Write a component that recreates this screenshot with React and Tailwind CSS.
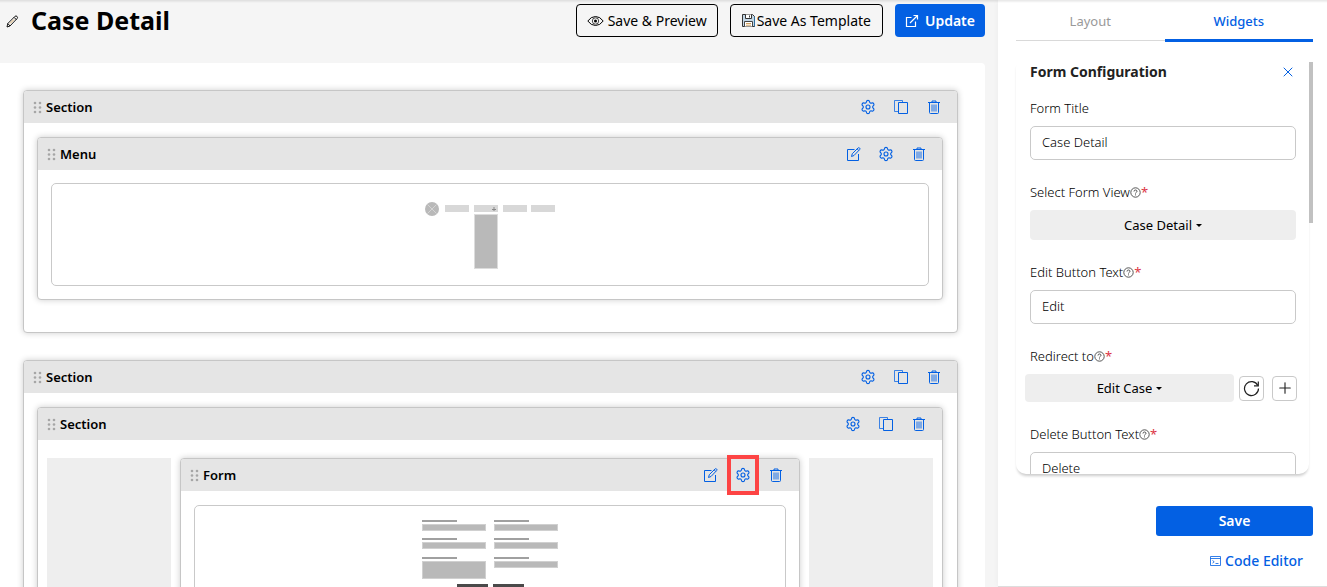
import { useState } from 'react';
import { Settings, Plus, X } from 'lucide-react';

const ICON = 'w-4 h-4 block';

const GripIcon = () => (
  <svg viewBox="0 0 9 13" className="w-[9px] h-[13px] shrink-0" fill="#a6a6a6">
    {[2, 6.5, 11].map((y) => (
      <g key={y}>
        <circle cx="2" cy={y} r="1.3" />
        <circle cx="7" cy={y} r="1.3" />
      </g>
    ))}
  </svg>
);

const PencilIcon = () => (
  <svg viewBox="0 0 13 13" className="w-[13px] h-[13px]" fill="none" stroke="currentColor" strokeWidth=".9">
    <path d="M1 12l.8-3.500L9 1.300q1-.8 2 .1t.2 2L4 11zM8 2.300L10.500 4.800M1.800 8.500L4 11" />
    <path d="M4 8.500l4-4" stroke="#d9a04a" strokeWidth=".8" />
  </svg>
);

const CopyIcon = () => (
  <svg viewBox="0 0 16 16" className={ICON} fill="none" stroke="currentColor">
    <path d="M5.500 12.500h-4v-11h8v2" strokeOpacity=".75" />
    <path d="M5.500 3.500h9v11h-9z" />
  </svg>
);

const TrashIcon = () => (
  <svg viewBox="0 0 16 16" className={ICON} fill="none" stroke="currentColor">
    <path d="M2 3.500h12M6 3.500v-1.500h4v1.500M3.500 3.500v10q0 1 1 1h7q1 0 1-1v-10" />
    <path d="M6 5.500v7M8 5.500v7M10 5.500v7" strokeWidth=".9" />
  </svg>
);

const EditIcon = () => (
  <svg viewBox="0 0 16 16" className={ICON} fill="none" stroke="currentColor">
    <path d="M9.500 3.500h-7v11h11V8" />
    <path d="M6.500 10.500l.8-2.800 5.800-5.800q.8-.6 1.500.1t.1 1.500L9 9.500zM12.200 2.900l1.500 1.500" />
  </svg>
);

const EyeIcon = () => (
  <svg viewBox="0 0 17 12" className="w-[17px] h-3" fill="none" stroke="currentColor">
    <path d="M.8 6Q4 1.500 8.500 1.500T16.200 6Q13 10.500 8.500 10.500T.8 6z" />
    <circle cx="8.500" cy="6" r="3.200" strokeWidth=".7" />
    <circle cx="8.500" cy="6" r="1.500" fill="currentColor" stroke="none" />
  </svg>
);

const FloppyIcon = () => (
  <svg viewBox="0 0 13 13" className="w-[13px] h-[13px]" fill="none">
    <path d="M.5.5h10l2 2v10H.5z" stroke="#333" fill="#8fb8d6" fillOpacity=".5" />
    <path d="M3.500.5v4h6v-4" stroke="#333" fill="#fff" />
    <path d="M7.500 1.500v2" stroke="#333" />
    <path d="M2.500 12.500v-5h8v5" stroke="#444" fill="#fff" />
    <path d="M4 9.500h5M4 11.200h5" stroke="#c58b3b" strokeWidth=".8" />
    <path d="M12.500 3v9.500" stroke="#2f6f9f" />
  </svg>
);

const OpenIcon = () => (
  <svg viewBox="0 0 14 14" className="w-[14px] h-[14px]" fill="none" stroke="currentColor" strokeWidth="1.200">
    <path d="M6.500 3.500h-5v9h9v-5" />
    <path d="M8.500 1.500h4v4M12.500 1.500L5 9" />
  </svg>
);

const RefreshIcon = () => (
  <svg viewBox="0 0 17 17" className="w-[17px] h-[17px]" fill="none" stroke="currentColor" strokeWidth="1.200">
    <path d="M14.800 5.500A7 7 0 1 0 15.500 8.500" />
    <path d="M15.300 1.500v4.300h-4.300" />
  </svg>
);

const HelpIcon = () => (
  <svg viewBox="0 0 11 11" className="w-[11px] h-[11px]" fill="none" stroke="#444" strokeWidth=".9">
    <circle cx="5.500" cy="5.500" r="4.700" />
    <path d="M4 4.500Q4 3 5.500 3T7 4.400Q7 5 6.200 5.400T5.500 6.500M5.500 7.400v1" />
  </svg>
);

const ConsoleIcon = () => (
  <svg viewBox="0 0 11 10" className="w-[11px] h-[10px]" fill="none" stroke="currentColor">
    <path d="M.5.5h10v9H.5zM.5 2.500h10" strokeOpacity=".8" />
    <path d="M2.500 4.500l1.700 1.300-1.700 1.300M5.500 7.500h3" strokeWidth=".8" />
  </svg>
);

const CaretIcon = () => (
  <svg viewBox="0 0 6 3" className="w-[6px] h-[3px]" fill="currentColor">
    <path d="M0 0h6L3 3z" />
  </svg>
);

const ACTIONS = {
  edit: { label: 'Edit', icon: <EditIcon /> },
  settings: { label: 'Settings', icon: <Settings className={ICON} strokeWidth={1.7} /> },
  copy: { label: 'Duplicate', icon: <CopyIcon /> },
  delete: { label: 'Delete', icon: <TrashIcon /> },
};

function Block({ title, actions, highlight, className = '', children }) {
  return (
    <section className={`border border-[#c6c6c6] rounded bg-white shadow-[0_0_6px_rgba(0,0,0,0.2)] ${className}`}>
      <header className="h-8 pl-[9px] pr-[15px] rounded-t-[3px] bg-[#e5e5e5] flex items-center justify-between">
        <div className="flex items-center gap-1">
          <GripIcon />
          <h2 className="text-[13px] leading-5 font-semibold">{title}</h2>
        </div>
        <div className="flex items-center gap-[17px] text-[#0360e3]">
          {actions.map((name) => (
            <button key={name} type="button" aria-label={ACTIONS[name].label} className="relative">
              {ACTIONS[name].icon}
              {highlight === name && (
                <span className="absolute -inset-x-2 -inset-y-3 border-4 border-[#fd4444]" />
              )}
            </button>
          ))}
        </div>
      </header>
      {children}
    </section>
  );
}

function MenuSketch() {
  return (
    <svg viewBox="0 0 130 68" className="w-[130px] h-[68px]">
      <circle cx="7" cy="7" r="7" fill="#b9b9b9" />
      <path d="M2.500 2.500l9 9M11.500 2.500l-9 9" stroke="#d4d4d4" />
      {[20, 49, 78, 106].map((x) => (
        <rect key={x} x={x} y="3" width="24" height="7" fill="#d8d8d8" />
      ))}
      <path d="M69 5v4M67 7.500h4" stroke="#888" />
      <rect x="49.500" y="12.500" width="23" height="54" fill="#b9b9b9" stroke="#dcdcdc" />
    </svg>
  );
}

function FormSketch() {
  const fields = [[0, 0, 7], [72, 0, 7], [0, 18, 7], [72, 18, 7], [0, 37, 18], [72, 37, 7]];
  return (
    <svg viewBox="0 0 136 80" className="w-[136px] h-20">
      {fields.map(([x, y, h]) => (
        <g key={`${x}-${y}`}>
          <rect x={x} y={y} width="35" height="2" fill="#a0a0a0" />
          <rect x={x + 0.5} y={y + 4.5} width="63" height={h - 1} fill="#b9b9b9" stroke="#d0d0d0" />
        </g>
      ))}
      <rect x="35" y="64" width="31" height="8" fill="#4a4a4a" />
      <rect x="71" y="64" width="31" height="8" fill="#4a4a4a" />
    </svg>
  );
}

function Field({ id, label, required, children }) {
  return (
    <div className="flex flex-col gap-2">
      <label htmlFor={id} className="flex items-center text-[13px] leading-5 font-light text-black">
        {label}
        {required && (
          <>
            <HelpIcon />
            <span className="text-[#dc3545] font-normal">*</span>
          </>
        )}
      </label>
      {children}
    </div>
  );
}

function TextInput({ id, value }) {
  return (
    <input
      id={id}
      type="text"
      defaultValue={value}
      className="w-full h-[34px] px-[11px] pb-0.5 border border-[#c9c9c9] rounded-[5px] text-[13px] font-light text-black bg-white"
    />
  );
}

function Dropdown({ id, value, className = '' }) {
  return (
    <div className={`flex items-center justify-center gap-1 rounded bg-[#eee] ${className}`}>
      <select id={id} defaultValue={value} className="appearance-none [field-sizing:content] text-[13px] leading-5 bg-transparent">
        <option>{value}</option>
      </select>
      <CaretIcon />
    </div>
  );
}

export default function App() {
  const [tab, setTab] = useState('Widgets');

  return (
    <div className="relative h-screen overflow-hidden flex bg-[#f5f5f5] text-black font-['Noto_Sans',sans-serif]">
      <main className="flex-1 min-w-0 pr-[13px] flex flex-col">
        <div className="h-[63px] shrink-0 pt-1 pl-1.5 flex items-start justify-between">
          <div className="flex items-center gap-3 h-[34px]">
            <button type="button" aria-label="Rename">
              <PencilIcon />
            </button>
            <h1 className="pb-0.5 text-[25px] leading-8 font-bold">Case Detail</h1>
          </div>
          <div className="flex gap-3 text-sm">
            <button type="button" className="h-[33px] px-[10px] flex items-center gap-1 border border-black rounded">
              <EyeIcon />
              Save &amp; Preview
            </button>
            <button type="button" className="h-[33px] px-[11px] flex items-center gap-0.5 border border-black rounded">
              <FloppyIcon />
              Save As Template
            </button>
            <button type="button" className="h-[33px] px-[10px] flex items-center gap-1.5 rounded bg-[#0360e3] text-white font-semibold">
              <OpenIcon />
              Update
            </button>
          </div>
        </div>

        <div className="flex-1 min-h-0 overflow-hidden bg-white rounded-tr pt-[27px] pl-[23px] pr-[27px]">
          <Block title="Section" actions={['settings', 'copy', 'delete']} className="mb-[27px]">
            <div className="pl-[13px] pr-[14px] pt-[14px] pb-8">
              <Block title="Menu" actions={['edit', 'settings', 'delete']}>
                <div className="p-[13px]">
                  <div className="pt-[18px] pb-[15px] flex justify-center border border-[#c9c9c9] rounded-[5px]">
                    <MenuSketch />
                  </div>
                </div>
              </Block>
            </div>
          </Block>

          <Block title="Section" actions={['settings', 'copy', 'delete']}>
            <div className="pl-[13px] pr-[14px] pt-[14px] pb-8">
              <Block title="Section" actions={['settings', 'copy', 'delete']}>
                <div className="px-[9px] pt-[18px] pb-4 flex gap-[9px]">
                  <div className="w-[124px] bg-[#eee]" />
                  <Block title="Form" actions={['edit', 'settings', 'delete']} highlight="settings" className="flex-1">
                    <div className="px-[13px] py-[14px]">
                      <div className="py-[14px] flex justify-center border border-[#c9c9c9] rounded-[5px]">
                        <FormSketch />
                      </div>
                    </div>
                  </Block>
                  <div className="w-[124px] bg-[#eee]" />
                </div>
              </Block>
            </div>
          </Block>
        </div>
      </main>

      <aside className="w-[329px] shrink-0 pl-[18px] pr-[14px] bg-white border-b border-[#ddd] shadow-[0_0_6px_rgba(0,0,0,0.04)]">
        <div className="h-[42px] grid grid-cols-2 text-[13px]">
          {['Layout', 'Widgets'].map((name) => (
            <button
              key={name}
              type="button"
              onClick={() => setTab(name)}
              className={tab === name
                ? 'pt-1 border-b-3 border-[#0360e3] text-[#0360e3] font-medium'
                : 'pt-1 mb-px border-b border-[#d9d9d9] text-[#999]'}
            >
              {name}
            </button>
          ))}
        </div>

        <div className="mt-4 flex">
          <div className="flex-1 h-[416px] overflow-hidden pl-[14px] pr-[13px] pt-1 rounded-[10px] shadow-[0_3px_3px_-1px_rgba(0,0,0,0.2)]">
            <div className="mb-4 flex items-center justify-between">
              <h3 className="text-sm leading-5 font-bold text-[#222]">Form Configuration</h3>
              <button type="button" aria-label="Close" className="text-[#0360e3]">
                <X className="w-4 h-4" strokeWidth={1.5} />
              </button>
            </div>
            <div className="flex flex-col gap-[22px]">
              <Field id="form-title" label="Form Title">
                <TextInput id="form-title" value="Case Detail" />
              </Field>
              <Field id="form-view" label="Select Form View" required>
                <Dropdown id="form-view" value="Case Detail" className="h-[30px]" />
              </Field>
              <Field id="edit-text" label="Edit Button Text" required>
                <TextInput id="edit-text" value="Edit" />
              </Field>
              <Field id="redirect" label="Redirect to" required>
                <div className="-mx-[5px] pr-1 flex items-center">
                  <Dropdown id="redirect" value="Edit Case" className="flex-1 h-7" />
                  <button type="button" aria-label="Reload" className="ml-[5px] w-[25px] h-[25px] grid place-items-center border border-[#c9c9c9] rounded text-[#222]">
                    <RefreshIcon />
                  </button>
                  <button type="button" aria-label="Add" className="ml-2 w-[25px] h-[25px] grid place-items-center border border-[#c9c9c9] rounded text-[#222]">
                    <Plus className="w-[18px] h-[18px]" strokeWidth={1.5} />
                  </button>
                </div>
              </Field>
              <Field id="delete-text" label="Delete Button Text" required>
                <TextInput id="delete-text" value="Delete" />
              </Field>
            </div>
          </div>
          <div className="mt-1 w-1 h-[161px] bg-[#c1c1c1]" />
        </div>

        <div className="mt-8 flex flex-col items-end gap-[15px] text-sm">
          <button type="button" className="w-[157px] h-[30px] rounded-[3px] bg-[#0360e3] text-white font-semibold">Save</button>
          <a href="#code-editor" className="mr-[10px] flex items-center gap-1 leading-5 text-[#0360e3] font-medium">
            <ConsoleIcon />
            Code Editor
          </a>
        </div>
      </aside>

      <div className="absolute inset-x-0 top-0 h-[3px] bg-linear-to-b from-black/10 to-transparent" />
    </div>
  );
}
